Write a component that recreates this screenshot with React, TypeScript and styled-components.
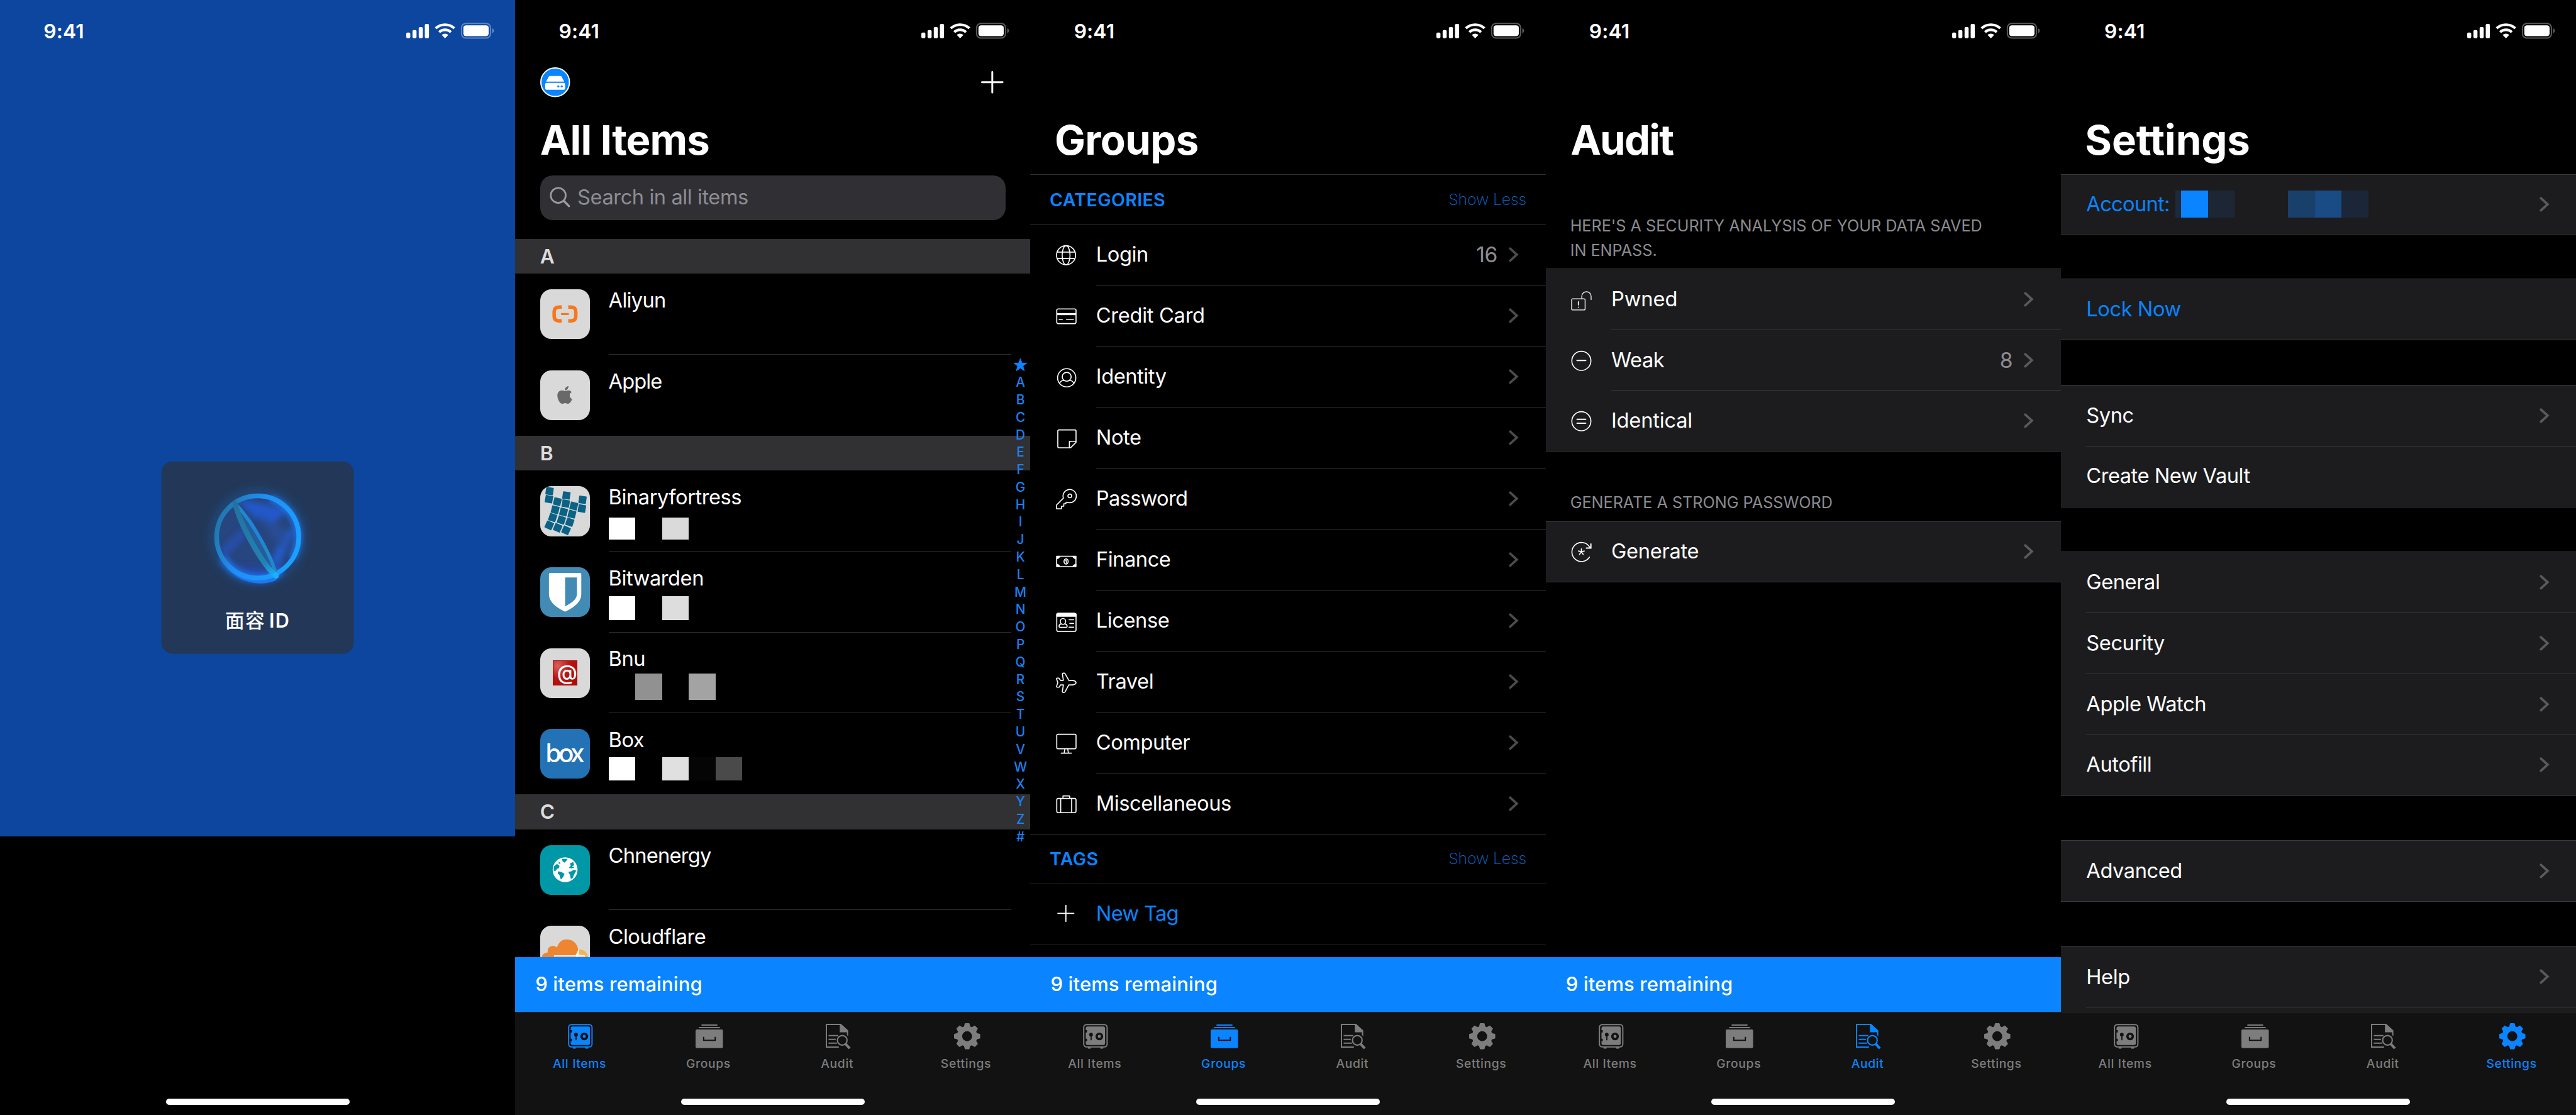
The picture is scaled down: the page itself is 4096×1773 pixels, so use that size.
import React, { ReactNode } from "react";
import styled, { createGlobalStyle, css } from "styled-components";
import { FaApple } from "react-icons/fa";

/* The board is designed on a 4140px wide canvas and shown at 4096px. */
const SCALE = 4096 / 4140;
const p = (n: number) => `${+(n * SCALE).toFixed(3)}px`;

const BLUE = "#0a84ff";
const GREY = "#7d7d7d";
const SANS = `Inter, "Noto Sans", "Liberation Sans", sans-serif`;

const GlobalStyle = createGlobalStyle`
  *, *::before, *::after { box-sizing: border-box; }
  body { margin: 0; background: #000; font-family: ${SANS}; overflow: hidden; }
`;

/* ---------- shell ---------- */

const Board = styled.main`
  display: flex;
  width: 4096px;
  height: 1773px;
  overflow: hidden;
  background: #000;
`;

const Screen = styled.section`
  position: relative;
  display: flex;
  flex-direction: column;
  width: ${p(828)};
  height: 100%;
  overflow: hidden;
  background: #000;
  color: #fff;
  font-size: ${p(33)};
  line-height: ${p(40)};
  letter-spacing: ${p(-0.45)};
  white-space: nowrap;
`;

const StatusBar = styled.header`
  display: flex;
  align-items: center;
  justify-content: space-between;
  flex: none;
  height: ${p(88)};
  padding: ${p(11)} ${p(34)} 0 ${p(70)};
`;

const Clock = styled.span`
  padding-top: ${p(2)};
  font-size: ${p(32)};
  font-weight: 600;
  letter-spacing: ${p(0.2)};
`;

const NavBar = styled.div`
  display: flex;
  align-items: center;
  justify-content: space-between;
  flex: none;
  height: ${p(88)};
  padding: 0 ${p(43)} 0 ${p(40)};
`;

const LargeTitle = styled.h1<{ $track: number; $gap?: number; $indent?: number }>`
  flex: none;
  margin: 0 0 ${(q) => p(q.$gap ?? 6)};
  padding-left: ${(q) => p(q.$indent ?? 40)};
  height: ${p(98)};
  line-height: ${p(99)};
  font-size: ${p(66)};
  font-weight: 700;
  letter-spacing: ${(q) => p(q.$track)};
`;

const Content = styled.div`
  flex: 1;
  min-height: 0;
  overflow: hidden;
`;

const Banner = styled.div`
  flex: none;
  height: ${p(88)};
  padding: 0 ${p(32.5)};
  background: ${BLUE};
  font-size: ${p(31.3)};
  line-height: ${p(87)};
  font-weight: 550;
  letter-spacing: ${p(0.15)};
`;

const TabBar = styled.nav`
  display: flex;
  flex-direction: column;
  align-items: center;
  flex: none;
  height: ${p(166)};
  border-top: 1px solid #2a2a2c;
  background: #121212;
`;

const Tabs = styled.div`
  display: flex;
  width: 100%;
  height: ${p(139)};
`;

const Tab = styled.div<{ $on: boolean }>`
  display: flex;
  flex: 1;
  flex-direction: column;
  align-items: center;
  padding-top: ${p(17)};
  color: ${(q) => (q.$on ? BLUE : GREY)};
  font-size: ${p(19.5)};
  font-weight: 450;
  line-height: ${p(24)};
  letter-spacing: ${p(0.65)};
`;

const TabIcon = styled.span`
  display: flex;
  align-items: center;
  justify-content: center;
  height: ${p(42)};
  margin-bottom: ${p(12)};
  padding-left: ${p(3)};
`;

const HomeIndicator = styled.div`
  flex: none;
  width: ${p(295)};
  height: ${p(10)};
  border-radius: ${p(5)};
  background: #fff;
`;

/* ---------- lock screen ---------- */

const LockBackdrop = styled.div`
  flex: none;
  height: ${p(1344)};
  background: #0c469e;
`;

const LockFooter = styled.div`
  display: flex;
  flex: 1;
  justify-content: center;
  align-items: flex-end;
  padding-bottom: ${p(16)};
`;

const FaceCard = styled.div`
  position: absolute;
  top: 50%;
  left: 50%;
  display: flex;
  flex-direction: column;
  align-items: center;
  width: ${p(310)};
  height: ${p(310)};
  padding-top: ${p(42)};
  transform: translate(-50%, -50%);
  border-radius: ${p(18)};
  background: #233858;
`;

const FaceLabel = styled.div`
  display: flex;
  align-items: center;
  gap: ${p(6)};
  margin-top: ${p(34)};
  font-family: Inter, "Noto Sans CJK SC", sans-serif;
  font-size: ${p(31)};
  font-weight: 500;
  letter-spacing: ${p(1.4)};
`;

const FaceLatin = styled.span`
  font-weight: 600;
`;

/* ---------- all items ---------- */

const SearchField = styled.div`
  display: flex;
  align-items: center;
  gap: ${p(12)};
  height: ${p(72)};
  margin: 0 ${p(40)} ${p(30)};
  padding: 0 ${p(15)} ${p(2)};
  border-radius: ${p(20)};
  background: #302f34;
  color: #8d8d93;
`;

const LetterHeader = styled.div`
  height: ${p(56)};
  padding-left: ${p(40)};
  background: #313133;
  color: #dcdcdd;
  line-height: ${p(56)};
  font-size: ${p(32)};
  font-weight: 600;
`;

const ItemRow = styled.div`
  display: flex;
  align-items: flex-start;
  gap: ${p(30)};
  height: ${p(130)};
  padding: 0 ${p(31)} 0 ${p(40)};

  &[data-last="true"] {
    height: ${p(130.5)};
  }
`;

const ItemBody = styled.div<{ $line: boolean }>`
  flex: 1;
  height: 100%;
  padding-top: ${p(23)};
  border-bottom: 1px solid ${(q) => (q.$line ? "#2f2f31" : "transparent")};
`;

const Label = styled.span<{ $track?: number; $accent?: boolean }>`
  display: block;
  color: ${(q) => (q.$accent ? BLUE : "inherit")};
  letter-spacing: ${(q) => p(q.$track ?? -0.45)};
`;

const Mosaic = styled.span<{ $h: number; $top?: number; $left?: number }>`
  display: flex;
  height: ${(q) => p(q.$h)};
  margin: ${(q) => p(q.$top ?? 0)} 0 0 ${(q) => p(q.$left ?? 0)};
`;

const Pixel = styled.i<{ $c: string; $w?: number }>`
  width: ${(q) => p(q.$w ?? 43)};
  height: 100%;
  background: ${(q) => q.$c};
`;

const Tile = styled.span<{ $bg: string }>`
  display: flex;
  flex: none;
  align-items: center;
  justify-content: center;
  width: ${p(80)};
  height: ${p(80)};
  margin-top: ${p(25.3)};
  overflow: hidden;
  border-radius: ${p(18)};
  background: ${(q) => q.$bg};
`;

const RedStamp = styled.span`
  display: flex;
  align-items: center;
  justify-content: center;
  width: ${p(40)};
  height: ${p(40)};
  padding: 0 0 ${p(1)} ${p(7)};
  overflow: hidden;
  border: ${p(2)} solid #9c1210;
  background: radial-gradient(circle at 18% 20%, #d9605c, #b81412 45%, #a80c0a);
  font-size: ${p(33)};
  font-weight: 500;
  letter-spacing: 0;
`;

const BoxWord = styled.span`
  padding: 0 ${p(4)} ${p(2)} 0;
  font-size: ${p(41)};
  font-weight: 500;
  letter-spacing: ${p(-4.6)};
`;

const IndexStrip = styled.div`
  position: absolute;
  top: ${p(572.3)};
  right: 0;
  display: flex;
  flex-direction: column;
  align-items: center;
  width: ${p(32)};
  color: #1c80f2;
  font-size: ${p(21)};
  font-weight: 550;
  letter-spacing: 0;
`;

const IndexMark = styled.span`
  display: flex;
  align-items: center;
  height: ${p(28.1)};
`;

/* ---------- grouped tables ---------- */

const LINE = "#2f2f31";

const GroupHeader = styled.div`
  display: flex;
  align-items: center;
  justify-content: space-between;
  height: ${p(79.5)};
  padding: ${p(1)} ${p(31)} 0 ${p(31)};
  border-bottom: 1px solid ${LINE};
  color: ${BLUE};
  font-size: ${p(28.8)};
  font-weight: 600;
  letter-spacing: ${p(0.4)};
`;

const ShowLess = styled.span`
  color: #0f66c8;
  font-size: ${p(25.3)};
  font-weight: 200;
  letter-spacing: ${p(-0.2)};
`;

const PlainList = styled.div`
  border-top: 1px solid ${LINE};
`;

const Inset = styled.div<{ $top?: number }>`
  margin-top: ${(q) => p(q.$top ?? 0)};
  border-top: 1px solid #3a3a3d;
  background: #1c1c1e;
`;

const Row = styled.div<{ $h?: number }>`
  display: flex;
  align-items: center;
  gap: ${p(31.3)};
  height: ${(q) => p(q.$h ?? 98.08)};
  padding-left: ${p(41)};
`;

const rowLine = css<{ $full?: boolean; $tone?: string }>`
  border-bottom: 1px solid ${(q) => q.$tone ?? LINE};
`;

const FullRow = styled(Row)<{ $tone?: string }>`
  ${rowLine}
`;

const RowBody = styled.div<{ $line: boolean; $tone?: string }>`
  display: flex;
  flex: 1;
  align-items: center;
  height: 100%;
  padding-right: ${p(43)};
  border-bottom: 1px solid ${(q) => (q.$line ? q.$tone ?? LINE : "transparent")};
`;

const Count = styled.span`
  margin: 0 ${p(18.5)} 0 auto;
  color: #8c8c90;
  font-size: ${p(34)};
`;

const Push = styled.span`
  margin-left: auto;
`;

const Note = styled.p<{ $top: number }>`
  width: ${p(715)};
  margin: 0;
  padding: ${(q) => p(q.$top)} 0 ${p(10)} ${p(39.5)};
  color: #8b8b90;
  font-size: ${p(25.5)};
  line-height: ${p(39.2)};
  letter-spacing: ${p(-0.03)};
  white-space: normal;
`;

/* ---------- drawings ---------- */

const Svg = styled.svg<{ $w: number; $h: number }>`
  display: block;
  flex: none;
  width: ${(q) => p(q.$w)};
  height: ${(q) => p(q.$h)};
  overflow: visible;
`;

const SystemIcons = ({ dim }: { dim: string }) => (
  <Svg $w={142} $h={26} viewBox="0 0 142 26">
    <g fill="#fff">
      <rect x="1" y="16" width="6.5" height="9" rx="2" />
      <rect x="11" y="12" width="6.5" height="13" rx="2" />
      <rect x="21" y="7" width="6.5" height="18" rx="2" />
      <rect x="30.8" y="2" width="6.7" height="23" rx="2" />
    </g>
    <g fill="none" stroke="#fff" strokeWidth="4.2">
      <path d="M48.3 9.2A22 22 0 0 1 78.3 9.2" />
      <path d="M53.8 15.2A14 14 0 0 1 72.8 15.2" />
    </g>
    <path d="M58 19.6A8 8 0 0 1 68.6 19.6L63.3 25.2Z" fill="#fff" />
    <rect x="89.8" y="1.2" width="46.6" height="23.6" rx="7" fill="none" stroke={dim} strokeWidth="2" />
    <rect x="92.8" y="4.2" width="40.6" height="17.6" rx="4.2" fill="#fff" />
    <path d="M139 9.2Q142 10.4 142 13.2T139 17.4Z" fill={dim} />
  </Svg>
);

const Chevron = ({ c = "#4b4b4e" }: { c?: string }) => (
  <Svg $w={16} $h={24} viewBox="0 0 16 24" fill="none" stroke={c} strokeWidth="3.8" strokeLinecap="round" strokeLinejoin="miter">
    <path d="M2.2 2.2L13 12L2.2 21.8" />
  </Svg>
);

const PlusMark = ({ size, w }: { size: number; w: number }) => (
  <Svg $w={size} $h={size} viewBox={`0 0 ${size} ${size}`} stroke="#fff" strokeWidth={w} strokeLinecap="round">
    <path d={`M${size / 2} 1.5V${size - 1.5}M1.5 ${size / 2}H${size - 1.5}`} />
  </Svg>
);

const VaultBadge = () => (
  <Svg $w={48} $h={48} viewBox="0 0 48 48">
    <circle cx="24" cy="24" r="23" fill={BLUE} stroke="#fff" strokeWidth="2" />
    <path d="M15.5 14H32.5Q33.8 14 34.4 15.2L38.6 23H9.4L13.6 15.2Q14.2 14 15.5 14Z" fill="#fff" />
    <rect x="8" y="25" width="32" height="11.2" rx="2.4" fill="#fff" />
    <circle cx="29" cy="30.7" r="1.7" fill={BLUE} />
    <circle cx="34.6" cy="30.7" r="1.7" fill={BLUE} />
  </Svg>
);

const Magnifier = () => (
  <Svg $w={33} $h={33} viewBox="0 0 33 33" fill="none" stroke="#9a9aa0" strokeWidth="2.8" strokeLinecap="round">
    <circle cx="13.8" cy="13.8" r="12" />
    <path d="M22.6 22.6L31 31" strokeWidth="3.6" />
  </Svg>
);

const Line = ({ children }: { children: ReactNode }) => (
  <Svg $w={33.3} $h={33.3} viewBox="0 0 100 100" fill="none" stroke="#fff" strokeWidth="5" strokeLinecap="round" strokeLinejoin="round">
    {children}
  </Svg>
);

const icons = {
  login: (
    <Line>
      <circle cx="49" cy="51" r="46" />
      <ellipse cx="49" cy="51" rx="19" ry="46" />
      <path d="M6 36H92M6 67H92" />
    </Line>
  ),
  card: (
    <Line>
      <rect x="4" y="16" width="93" height="71" rx="7" />
      <path d="M4 36H97V46H4Z" fill="#fff" stroke="none" />
      <path d="M15 66H31M51 66H85" />
    </Line>
  ),
  identity: (
    <Line>
      <circle cx="52" cy="54" r="44" />
      <circle cx="52" cy="49" r="21.5" />
      <path d="M18 81C22 70 31 66 40 67M64 67C73 66 82 70 86 81" />
    </Line>
  ),
  note: (
    <Line>
      <path d="M15 11H91a6 6 0 0 1 6 6V71L71 97H15a6 6 0 0 1-6-6V17a6 6 0 0 1 6-6Z" />
      <path d="M65 96V66H96" />
    </Line>
  ),
  key: (
    <Line>
      <path d="M36 46L3 79V97H27V85H38V73H48V68L53 65A32 32 0 1 0 36 46Z" />
      <circle cx="67" cy="35" r="9" />
    </Line>
  ),
  finance: (
    <Line>
      <rect x="3.5" y="32" width="93" height="50" />
      <path d="M4 32H20Q18 43 4 46ZM97 32H80Q82 43 97 46ZM4 82H20Q18 71 4 68ZM97 82H80Q82 71 97 68Z" fill="#fff" strokeWidth="1" />
      <ellipse cx="49" cy="57" rx="10" ry="12.5" />
      <path d="M46 54L50 51V63" strokeWidth="4" />
    </Line>
  ),
  license: (
    <Line>
      <rect x="4" y="13" width="93" height="87" rx="7" />
      <path d="M4 27V19Q4 13 11 13H90Q97 13 97 19V27Z" fill="#fff" />
      <ellipse cx="34" cy="52" rx="13" ry="14" />
      <path d="M25 64Q15 66 15 75V77Q15 81 20 81H49Q54 81 54 77V75Q54 66 44 64" />
      <path d="M63 44H86M67 62H86M63 80H86" />
    </Line>
  ),
  travel: (
    <Line>
      <path d="M36 42L31 12Q31 7 36 7H40Q43 7 45 11L62 42H78Q97 44 97 53Q97 62 78 64H62L45 96Q43 100 40 100H35Q30 100 31 95L36 64H23L15 75H6Q2 75 3 71L9 53L3 35Q2 31 6 31H14L22 42Z" />
    </Line>
  ),
  computer: (
    <Line>
      <rect x="4" y="8" width="93" height="70" rx="6" />
      <path d="M43 79L40 97M57 79L60 97M25 99H75" />
    </Line>
  ),
  misc: (
    <Line>
      <rect x="4" y="26" width="93" height="69" rx="8" />
      <path d="M23 26V95M76 26V95M34 25V14H66V25" />
    </Line>
  ),
  pwned: (
    <Line>
      <rect x="3" y="46" width="65" height="54" rx="6" strokeWidth="4" />
      <path d="M52 45V34A22 22 0 0 1 97 34V50" strokeWidth="4" />
      <path d="M35.5 60V76M35.5 86V87" />
    </Line>
  ),
  weak: (
    <Line>
      <circle cx="50" cy="51" r="46" />
      <path d="M29 49H71" strokeWidth="6.5" />
    </Line>
  ),
  identical: (
    <Line>
      <circle cx="50" cy="51" r="46" />
      <path d="M29 42H71M29 61H71" strokeWidth="6" />
    </Line>
  ),
  generate: (
    <Line>
      <path d="M89 26A46 46 0 1 0 89 76" />
      <path d="M96 10V32H72M89 25L94 31" strokeLinejoin="miter" strokeLinecap="butt" strokeWidth="6" />
      <path d="M50 50V36M50 50L64 46M50 50L59 62M50 50L41 62M50 50L36 46" />
    </Line>
  ),
};

const BinaryLogo = () => {
  const cells = [
    [15, 8, 8], [42, 15, 8], [68, 22, 8], [14, 21, 10], [27.5, 25, 14], [41, 28, 10], [54, 32, 14], [67, 36, 10],
    [24, 38, 14], [37.5, 41.5, 14], [51, 45, 14], [20, 50.5, 18], [34, 54.5, 18], [47.5, 58, 18],
    [14.5, 63, 24], [28, 67, 24], [41.5, 71, 24],
  ];
  return (
    <Svg $w={80} $h={80} viewBox="0 0 80 80" fill="#0b6285">
      {cells.map(([x, y, r], i) => (
        <rect key={i} x={x - 6.1} y={y - 6.1} width="12.2" height="12.2" rx="1" transform={`rotate(${r} ${x} ${y})`} />
      ))}
    </Svg>
  );
};

const tiles: Record<string, ReactNode> = {
  Aliyun: (
    <Tile $bg="#d9d9d9">
      <Svg $w={80} $h={80} viewBox="0 0 80 80" fill="none" stroke="#f8771a" strokeWidth="5.6">
        <path d="M34.5 28.6H30Q22.4 29 22.4 36V43.5Q22.4 50.5 30 50.8H34.5" />
        <path d="M45 28.6H49.5Q57.2 29 57.2 36V43.5Q57.2 50.5 49.5 50.8H45" />
        <path d="M33.5 39.8H46" strokeWidth="3.2" />
      </Svg>
    </Tile>
  ),
  Apple: (
    <Tile $bg="#d9d9d9">
      <FaApple size={32} color="#696969" />
    </Tile>
  ),
  Binaryfortress: (
    <Tile $bg="#d9d9da">
      <BinaryLogo />
    </Tile>
  ),
  Bitwarden: (
    <Tile $bg="#418bb5">
      <Svg $w={80} $h={80} viewBox="0 0 80 80">
        <path d="M16 9H64Q66 9 66 11.5V43C66 56 55 64 40 71.5C25 64 14 56 14 43V11.5Q14 9 16 9Z" fill="#fff" />
        <path d="M40 16.5H59V43C59 51.5 51 57 40 63Z" fill="#418bb5" />
      </Svg>
    </Tile>
  ),
  Bnu: (
    <Tile $bg="#d9d9d9">
      <RedStamp>@</RedStamp>
    </Tile>
  ),
  Box: (
    <Tile $bg="#2272b5">
      <BoxWord>box</BoxWord>
    </Tile>
  ),
  Chnenergy: (
    <Tile $bg="#0097a7">
      <Svg $w={80} $h={80} viewBox="0 0 80 80" fill="#0097a7">
        <circle cx="40" cy="39.5" r="20" fill="#fff" />
        <path d="M29 42L34 43L39 46L37.5 50L34 54.500L32 53L31 48L28 45ZM45 43L50 42L54 39.500L58 41L54.500 47L52 53L49 54L48 48Z" />
        <path d="M22 34L27 30L31 33L30 37L27 38L24.500 41.500L21.500 41ZM35 22L44 22L42 25L39 28L36 26ZM30 26L33 29L29.500 30ZM48 29L53 27L54.500 32L51 34L55 36L50 37.500L46 36L49 33Z" />
      </Svg>
    </Tile>
  ),
  Cloudflare: (
    <Tile $bg="#d9d9d9">
      <Svg $w={80} $h={80} viewBox="0 0 80 80">
        <path d="M60 54L63 38Q76 39 78 54Z" fill="#f6b352" />
        <path d="M2 54Q2 44 12 43Q11 34 19 32.5Q24 32 27 35Q31 22 43 22Q58 23 61 38L57 54Z" fill="#ee8530" />
        <path d="M22 47.5H56Q59 46 62 36L62.5 46.5L72 47.5V49.5H22Z" fill="#fbf3ea" />
      </Svg>
    </Tile>
  ),
};

const SafeIcon = () => (
  <Svg $w={40} $h={40} viewBox="0 0 40 40" fill="currentColor">
    <rect x="1.2" y="1.2" width="37.6" height="36" rx="4.5" fill="none" stroke="currentColor" strokeWidth="2" />
    <rect x="4.5" y="4.2" width="31" height="30" rx="3" />
    <path d="M8 37H12.5V40H8ZM28 37H32.5V40H28Z" />
    <g fill="#121212">
      <path d="M4 10H6.5V14H4ZM4 24H6.5V28H4Z" />
      <circle cx="13" cy="17.5" r="3" />
      <rect x="12.2" y="17.5" width="1.8" height="9" />
      <circle cx="26.3" cy="20.3" r="6.2" />
    </g>
    <circle cx="26.3" cy="20.3" r="2.5" />
  </Svg>
);

const DrawerIcon = () => (
  <Svg $w={44} $h={38} viewBox="0 0 44 38" fill="currentColor">
    <path d="M9.500 0H35V2.100H9.500ZM5.500 4.100H39V6.100H5.500Z" />
    <rect y="8" width="44" height="30" rx="2" />
    <path d="M13 20V25.600H31.600V20" fill="none" stroke="#121212" strokeWidth="2" />
  </Svg>
);

const AuditIcon = () => (
  <Svg $w={40} $h={40} viewBox="0 0 40 40" fill="none" stroke="currentColor" strokeWidth="2">
    <path d="M21 37.500H1V1H24" />
    <path d="M22.500 0H24.500L36 10.500V20L34 18V13.700H22.500Z" fill="currentColor" stroke="none" />
    <path d="M4.500 19H20M4.500 25H16M4.500 31H18" />
    <circle cx="26.5" cy="26.5" r="7.7" strokeWidth="2.2" />
    <path d="M32 32.500L38.500 39.500" strokeWidth="4" />
  </Svg>
);

const GearIcon = () => (
  <Svg $w={42} $h={42} viewBox="-21 -21 42 42" fill="currentColor">
    <circle r="12.2" fill="none" stroke="currentColor" strokeWidth="8.4" />
    {[0, 45, 90, 135, 180, 225, 270, 315].map((a) => (
      <path key={a} d="M-5.500 -14L-3.800 -20.200Q-3.600 -21 -2.800 -21H2.800Q3.600 -21 3.800 -20.200L5.500 -14Z" transform={`rotate(${a})`} />
    ))}
  </Svg>
);

const StarMark = () => (
  <Svg $w={21} $h={21} viewBox="0 0 24 24">
    <path fill={BLUE} stroke={BLUE} strokeLinejoin="round" d="M12 0L15.100 8.500H24L16.900 13.900L19.400 22.800L12 17.600L4.600 22.800L7.100 13.900L0 8.500H8.900Z" />
  </Svg>
);

const Orb = () => (
  <Svg $w={160} $h={160} viewBox="-80 -80 160 160">
    <defs>
      <filter id="soft" x="-50%" y="-50%" width="200%" height="200%">
        <feGaussianBlur stdDeviation="5" />
      </filter>
      <filter id="softer" x="-50%" y="-50%" width="200%" height="200%">
        <feGaussianBlur stdDeviation="9" />
      </filter>
      <linearGradient id="rim" x1="0" y1="0.2" x2="1" y2="0.6">
        <stop offset="0" stopColor="#2274a4" />
        <stop offset="0.45" stopColor="#1f90f5" />
        <stop offset="1" stopColor="#1aa0ff" />
      </linearGradient>
      <linearGradient id="blade" x1="0" y1="0" x2="1" y2="0">
        <stop offset="0" stopColor="#2272a0" />
        <stop offset="0.8" stopColor="#2182b4" />
        <stop offset="1" stopColor="#18b0ff" />
      </linearGradient>
      <clipPath id="inside">
        <circle r="64" />
      </clipPath>
    </defs>
    <circle r="67" fill="none" stroke="#1c66c8" strokeWidth="12" opacity="0.55" filter="url(#softer)" />
    <circle r="64" fill="#27457f" />
    <g clipPath="url(#inside)">
      <g filter="url(#soft)">
        <path d="M-34 -62L48 -44L22 -18L-8 -34Z" fill="#2459cc" />
        <path d="M62 -16L32 50L20 40L44 -6Z" fill="#245bca" />
        <path d="M-60 20L-20 -18L-22 2L-54 34Z" fill="#2650ac" />
        <path d="M-40 46L20 48L0 62Z" fill="#2744a4" />
        <path d="M0 -40L50 -10L44 20L22 0Z" fill="#264e9c" opacity="0.7" />
      </g>
    </g>
    <path d="M-56 34A66 66 0 0 0 38 54" fill="none" stroke="#1f74ff" strokeWidth="12" filter="url(#soft)" />
    <path d="M20 -62A66 66 0 0 1 56 34" fill="none" stroke="#1f7dff" strokeWidth="9" filter="url(#soft)" />
    <path d="M-46 48A67 67 0 0 0 26 67" fill="none" stroke="#1f7bff" strokeWidth="8" strokeLinecap="round" opacity="0.85" />
    <circle r="66" fill="none" stroke="url(#rim)" strokeWidth="7.5" />
    <g transform="translate(-3.5 4.5) rotate(60.5)">
      <path d="M-67 0C-30 -10 40 -10 67 0C40 10 -30 10 -67 0Z" fill="#2468a4" opacity="0.7" />
      <path d="M-67 0C-30 -10 40 -10 67 0" fill="none" stroke="#2288cc" strokeWidth="5.5" strokeLinecap="round" />
      <path d="M-34 -7C-18 -9 0 -9 10 -8" fill="none" stroke="#1f80f4" strokeWidth="6" filter="url(#soft)" />
      <path d="M-67 0C-30 10 40 10 67 0" fill="none" stroke="url(#blade)" strokeWidth="8.5" strokeLinecap="round" />
      <circle cx="66" r="5" fill="#18b0ff" />
    </g>
  </Svg>
);

/* ---------- composed parts ---------- */

type TabName = "All Items" | "Groups" | "Audit" | "Settings";

const TABS: [TabName, () => React.JSX.Element][] = [
  ["All Items", SafeIcon],
  ["Groups", DrawerIcon],
  ["Audit", AuditIcon],
  ["Settings", GearIcon],
];

const Status = ({ dim = "#5a5a5a" }: { dim?: string }) => (
  <StatusBar>
    <Clock>9:41</Clock>
    <SystemIcons dim={dim} />
  </StatusBar>
);

const BottomTabs = ({ active }: { active: TabName }) => (
  <TabBar>
    <Tabs>
      {TABS.map(([name, Icon]) => (
        <Tab key={name} $on={name === active}>
          <TabIcon>
            <Icon />
          </TabIcon>
          {name}
        </Tab>
      ))}
    </Tabs>
    <HomeIndicator />
  </TabBar>
);

type Item = { name: string; track?: number; mask?: { top: number; h: number; colors: string[] } };

const SECTIONS: [string, Item[]][] = [
  ["A", [{ name: "Aliyun", track: -0.7 }, { name: "Apple", track: -0.9 }]],
  [
    "B",
    [
      { name: "Binaryfortress", mask: { top: 12.5, h: 35.5, colors: ["#fff", "#000", "#dadada"] } },
      { name: "Bitwarden", mask: { top: 9, h: 38, colors: ["#fff", "#000", "#dddddd"] } },
      { name: "Bnu", mask: { top: 3.6, h: 42.4, colors: ["#000", "#919191", "#000", "#a3a3a3"] } },
      { name: "Box", mask: { top: 8, h: 37, colors: ["#fff", "#000", "#e0e0e0", "#050505", "#4a4a4a"] } },
    ],
  ],
  ["C", [{ name: "Chnenergy", track: -0.75 }, { name: "Cloudflare", track: -0.5 }]],
];

const INDEX = [..."ABCDEFGHIJKLMNOPQRSTUVWXYZ#"];

const LockScreen = () => (
  <Screen>
    <LockBackdrop>
      <Status dim="#5f87c4" />
    </LockBackdrop>
    <LockFooter>
      <HomeIndicator />
    </LockFooter>
    <FaceCard>
      <Orb />
      <FaceLabel>
        面容<FaceLatin>ID</FaceLatin>
      </FaceLabel>
    </FaceCard>
  </Screen>
);

const AllItemsScreen = () => (
  <Screen>
    <Status />
    <NavBar>
      <VaultBadge />
      <PlusMark size={36} w={3} />
    </NavBar>
    <LargeTitle $track={-0.9} $gap={8}>All Items</LargeTitle>
    <Content>
      <SearchField>
        <Magnifier />
        Search in all items
      </SearchField>
      {SECTIONS.map(([letter, items]) => (
        <React.Fragment key={letter}>
          <LetterHeader>{letter}</LetterHeader>
          {items.map((item, i) => (
            <ItemRow key={item.name} data-last={i === items.length - 1}>
              {tiles[item.name]}
              <ItemBody $line={i < items.length - 1}>
                <Label $track={item.track}>{item.name}</Label>
                {item.mask && (
                  <Mosaic $h={item.mask.h} $top={item.mask.top}>
                    {item.mask.colors.map((c, k) => (
                      <Pixel key={k} $c={c} />
                    ))}
                  </Mosaic>
                )}
              </ItemBody>
            </ItemRow>
          ))}
        </React.Fragment>
      ))}
    </Content>
    <Banner>9 items remaining</Banner>
    <BottomTabs active="All Items" />
    <IndexStrip>
      <IndexMark>
        <StarMark />
      </IndexMark>
      {INDEX.map((c) => (
        <IndexMark key={c}>{c}</IndexMark>
      ))}
    </IndexStrip>
  </Screen>
);

const CATEGORIES: { name: string; icon: ReactNode; count?: string; track?: number }[] = [
  { name: "Login", icon: icons.login, count: "16" },
  { name: "Credit Card", icon: icons.card, track: -0.3 },
  { name: "Identity", icon: icons.identity },
  { name: "Note", icon: icons.note },
  { name: "Password", icon: icons.key, track: -0.7 },
  { name: "Finance", icon: icons.finance },
  { name: "License", icon: icons.license },
  { name: "Travel", icon: icons.travel },
  { name: "Computer", icon: icons.computer },
  { name: "Miscellaneous", icon: icons.misc },
];

const GroupsScreen = () => (
  <Screen>
    <Status />
    <NavBar />
    <LargeTitle $track={-0.6} $indent={39}>Groups</LargeTitle>
    <Content>
      <PlainList>
        <GroupHeader>
          CATEGORIES<ShowLess>Show Less</ShowLess>
        </GroupHeader>
        {CATEGORIES.map((c, i) => {
          const last = i === CATEGORIES.length - 1;
          const Wrap = last ? FullRow : Row;
          return (
            <Wrap key={c.name}>
              {c.icon}
              <RowBody $line={!last}>
                <Label $track={c.track}>{c.name}</Label>
                {c.count ? <Count>{c.count}</Count> : <Push />}
                <Chevron />
              </RowBody>
            </Wrap>
          );
        })}
        <GroupHeader>
          TAGS<ShowLess>Show Less</ShowLess>
        </GroupHeader>
        <FullRow>
          <Line>
            <path d="M48 8V85M9.500 46.500H86.500" strokeWidth="5.500" />
          </Line>
          <RowBody $line={false}>
            <Label $accent $track={-0.7}>New Tag</Label>
          </RowBody>
        </FullRow>
      </PlainList>
    </Content>
    <Banner>9 items remaining</Banner>
    <BottomTabs active="Groups" />
  </Screen>
);

const TONE = "#3a3a3d";
const CHEV = "#5a5a5e";

const AuditScreen = () => (
  <Screen>
    <Status />
    <NavBar />
    <LargeTitle $track={-1.8} $gap={0}>Audit</LargeTitle>
    <Content>
      <Note $top={69.5}>HERE'S A SECURITY ANALYSIS OF YOUR DATA SAVED IN ENPASS.</Note>
      <Inset>
        <Row $h={97.6}>
          {icons.pwned}
          <RowBody $line $tone={TONE}>
            <Label $track={-0.1}>Pwned</Label>
            <Push />
            <Chevron c={CHEV} />
          </RowBody>
        </Row>
        <Row $h={97.6}>
          {icons.weak}
          <RowBody $line $tone={TONE}>
            <Label>Weak</Label>
            <Count>8</Count>
            <Chevron c={CHEV} />
          </RowBody>
        </Row>
        <FullRow $h={97.6} $tone={TONE}>
          {icons.identical}
          <RowBody $line={false}>
            <Label $track={-0.2}>Identical</Label>
            <Push />
            <Chevron c={CHEV} />
          </RowBody>
        </FullRow>
      </Inset>
      <Note $top={63.2}>GENERATE A STRONG PASSWORD</Note>
      <Inset>
        <FullRow $h={97} $tone={TONE}>
          {icons.generate}
          <RowBody $line={false}>
            <Label $track={-0.3}>Generate</Label>
            <Push />
            <Chevron c={CHEV} />
          </RowBody>
        </FullRow>
      </Inset>
    </Content>
    <Banner>9 items remaining</Banner>
    <BottomTabs active="Audit" />
  </Screen>
);

type Setting = { name: string; track?: number; accent?: boolean; chevron?: boolean; account?: boolean };

const SETTINGS: Setting[][] = [
  [{ name: "Account:", accent: true, chevron: true, account: true, track: -0.7 }],
  [{ name: "Lock Now", accent: true }],
  [{ name: "Sync", chevron: true }, { name: "Create New Vault", track: -0.5 }],
  [
    { name: "General", chevron: true },
    { name: "Security", chevron: true },
    { name: "Apple Watch", chevron: true },
    { name: "Autofill", chevron: true },
  ],
  [{ name: "Advanced", chevron: true }],
  [{ name: "Help", chevron: true }, { name: "", chevron: false }],
];

const SettingsScreen = () => (
  <Screen>
    <Status />
    <NavBar />
    <LargeTitle $track={-0.1} $indent={39}>Settings</LargeTitle>
    <Content>
      {SETTINGS.map((group, g) => (
        <Inset key={g} $top={g ? 71.1 : 0}>
          {group.map((s, i) => {
            const last = i === group.length - 1;
            const Wrap = last ? FullRow : Row;
            return (
              <Wrap key={i} $h={s.account ? 96 : 98} $tone={TONE}>
                <RowBody $line={!last} $tone={TONE}>
                  <Label $track={s.track} $accent={s.accent}>{s.name}</Label>
                  {s.account && (
                    <Mosaic $h={43} $left={9.5} $top={0}>
                      <Pixel $w={9} $c="#1c2a3c" />
                      <Pixel $c={BLUE} />
                      <Pixel $c="#1d2635" />
                      <Pixel $w={86} $c="#1c1c1e" />
                      <Pixel $c="#193f6b" />
                      <Pixel $c="#194b85" />
                      <Pixel $c="#1b2739" />
                    </Mosaic>
                  )}
                  <Push />
                  {s.chevron && <Chevron c={CHEV} />}
                </RowBody>
              </Wrap>
            );
          })}
        </Inset>
      ))}
    </Content>
    <BottomTabs active="Settings" />
  </Screen>
);

export default function App() {
  return (
    <>
      <GlobalStyle />
      <Board>
        <LockScreen />
        <AllItemsScreen />
        <GroupsScreen />
        <AuditScreen />
        <SettingsScreen />
      </Board>
    </>
  );
}
